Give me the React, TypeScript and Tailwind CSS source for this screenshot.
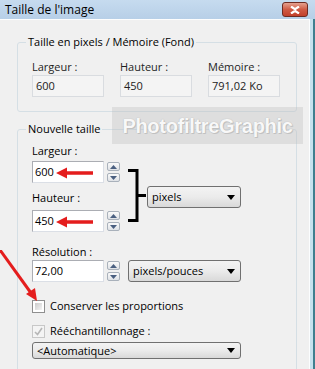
import React from "react";

const ui = "font-['Open_Sans',sans-serif]";

function Triangle({ up }: { up?: boolean }) {
  return (
    <svg width="7" height="4" viewBox="0 0 7 4">
      <path d={up ? "M0 4 L3.5 0 L7 4 Z" : "M0 0 L7 0 L3.5 4 Z"} fill="#4a5f80" />
    </svg>
  );
}

function Spin() {
  return (
    <div className="ml-[3px] flex h-[22px] w-[14px] flex-col justify-center gap-[2px]">
      <div className="flex h-[9px] w-[13px] items-center justify-center rounded-[2px] border border-[#a9b1bb] bg-gradient-to-b from-[#fafafa] to-[#dfe2e6]">
        <Triangle up />
      </div>
      <div className="flex h-[9px] w-[13px] items-center justify-center rounded-[2px] border border-[#a9b1bb] bg-gradient-to-b from-[#fafafa] to-[#dfe2e6]">
        <Triangle />
      </div>
    </div>
  );
}

function RedArrow() {
  return (
    <svg className="absolute left-[23px] top-[5px]" width="38" height="12" viewBox="0 0 38 12">
      <path d="M0 6 L11 0.5 L11 4.3 L37 4.3 L37 7.7 L11 7.7 L11 11.5 Z" fill="#e41d1d" />
    </svg>
  );
}

function Field({ value, arrow }: { value: string; arrow?: boolean }) {
  return (
    <div className="relative flex h-[22px] w-[72px] items-center border border-[#abadb3] border-b-[#dbdfe6] border-r-[#dbdfe6] bg-white pl-[2px] text-black">
      {value}
      {arrow && <RedArrow />}
    </div>
  );
}

function Combo({ label, size }: { label: string; size: string }) {
  return (
    <div
      className={`flex ${size} items-center justify-between rounded-[3px] border border-[#707070] bg-gradient-to-b from-[#f3f3f3] via-[#ebebeb] to-[#d9d9d9] pl-[4px] pr-[5px] text-black`}
    >
      <span>{label}</span>
      <svg width="8" height="5" viewBox="0 0 8 5">
        <path d="M0 0 L8 0 L4 5 Z" fill="#000" />
      </svg>
    </div>
  );
}

function ReadBox({ label, value }: { label: string; value: string }) {
  return (
    <div className="w-[72px]">
      <div className="h-[16px] leading-[16px] text-[#1e1e1e]">{label}</div>
      <div className="flex h-[22px] items-center border border-[#d9dce0] bg-[#f4f4f4] pl-[3px] text-[#222]">
        {value}
      </div>
    </div>
  );
}

export default function App() {
  return (
    <div className={`flex h-[369px] w-[315px] flex-col overflow-hidden bg-[#bdd4ea] text-[11px] ${ui}`}>
      {/* title bar */}
      <div className="flex h-[19px] shrink-0 items-center justify-between bg-gradient-to-b from-[#c6dbef] to-[#b7cfe7] pl-[5px] pr-[7px]">
        <span className="text-[12px] leading-[16px] text-black">Taille de l'image</span>
        <div className="flex h-[15px] w-[26px] items-center justify-center rounded-[3px] border border-[#6e2b22] bg-gradient-to-b from-[#e4a08f] via-[#cf5a44] to-[#c2402b]">
          <svg width="10" height="8" viewBox="0 0 10 8">
            <path d="M1 0.5 L5 3.2 L9 0.5 M1 7.5 L5 4.8 L9 7.5" stroke="#fff" strokeWidth="2.2" fill="none" />
          </svg>
        </div>
      </div>

      <div className="flex min-h-0 flex-1">
        <div className="relative flex-1 border-t border-[#fdfdfd] bg-[#f0f0f0] leading-[16px] text-black">
          {/* Taille en pixels */}
          <fieldset className="ml-[17px] mt-[14px] w-[280px] rounded-[3px] border border-[#d5dfe5]">
            <legend className="ml-[8px] px-[2px] leading-[16px] text-black">Taille en pixels / Mémoire (Fond)</legend>
            <div className="flex gap-[16px] pb-[14px] pl-[14px] pt-[9px]">
              <ReadBox label="Largeur :" value="600" />
              <ReadBox label="Hauteur :" value="450" />
              <ReadBox label="Mémoire :" value="791,02 Ko" />
            </div>
          </fieldset>

          {/* Nouvelle taille */}
          <fieldset className="ml-[17px] mt-[9px] w-[280px] rounded-[3px] border border-[#d5dfe5] pb-[20px]">
            <legend className="ml-[8px] px-[2px] leading-[16px] text-black">Nouvelle taille</legend>
            <div className="pl-[14px] pt-[6px]">
              <div className="flex">
                <div>
                  <div className="h-[16px]">Largeur :</div>
                  <div className="mt-[2px] flex">
                    <Field value="600" arrow />
                    <Spin />
                  </div>
                  <div className="mt-[7px] h-[16px]">Hauteur :</div>
                  <div className="mt-[4px] flex">
                    <Field value="450" arrow />
                    <Spin />
                  </div>
                </div>
                <svg className="ml-[6px] shrink-0" width="20" height="90" viewBox="0 0 20 90">
                  <path d="M1 27.5 H10 V77.5 H1 M10 52.5 H19" stroke="#000" strokeWidth="3" fill="none" />
                </svg>
                <div className="mt-[43px]">
                  <Combo label="pixels" size="h-[22px] w-[94px]" />
                </div>
              </div>

              <div className="mt-[11px] h-[16px]">Résolution :</div>
              <div className="flex">
                <Field value="72,00" />
                <Spin />
                <div className="ml-[7px]">
                  <Combo label="pixels/pouces" size="h-[22px] w-[113px]" />
                </div>
              </div>

              <div className="mt-[16px] flex h-[16px] items-center gap-[5px]">
                <div className="h-[13px] w-[13px] border border-[#8f8f8f] bg-white p-[2px]">
                  <div className="h-full w-full bg-gradient-to-br from-[#cbcbcb] to-[#f5f5f5]" />
                </div>
                <span>Conserver les proportions</span>
              </div>

              <div className="mt-[9px] flex h-[16px] items-center gap-[5px]">
                <div className="flex h-[13px] w-[13px] items-center justify-center border border-[#c8c8c8] bg-[#f4f4f4]">
                  <svg width="9" height="9" viewBox="0 0 9 9">
                    <path d="M1 5 L3.5 7.5 L8 1" stroke="#b6b6b6" strokeWidth="1.6" fill="none" />
                  </svg>
                </div>
                <span>Rééchantillonnage :</span>
              </div>

              <div className="mt-[3px]">
                <Combo label="<Automatique>" size="h-[17px] w-[209px]" />
              </div>
            </div>
          </fieldset>

          {/* watermark */}
          <div className="absolute left-[112px] top-[87px] flex h-[37px] w-[191px] items-center justify-center bg-[#bdbdbd]/35">
            <span className="font-['Liberation_Sans',sans-serif] text-[20px] font-bold tracking-[-0.3px] text-[#f8f8f8] [text-shadow:0_0_1px_#a9a9a9,1px_1px_0_#c4c4c4]">
              PhotofiltreGraphic
            </span>
          </div>

          {/* diagonal arrow */}
          <svg className="absolute left-0 top-[230px]" width="40" height="52" viewBox="0 0 40 52">
            <path d="M0 0 L31 43" stroke="#e41d1d" strokeWidth="3" />
            <path d="M37 51 L26 44 L35 38 Z" fill="#e41d1d" />
          </svg>
        </div>

        {/* right frame */}
        <div className="flex w-[6px] shrink-0">
          <div className="w-[1px] bg-[#fbfdfe]" />
          <div className="flex-1 bg-[#c6e2ee]" />
          <div className="w-[2px] bg-[#3f7f8f]" />
        </div>
      </div>
    </div>
  );
}
